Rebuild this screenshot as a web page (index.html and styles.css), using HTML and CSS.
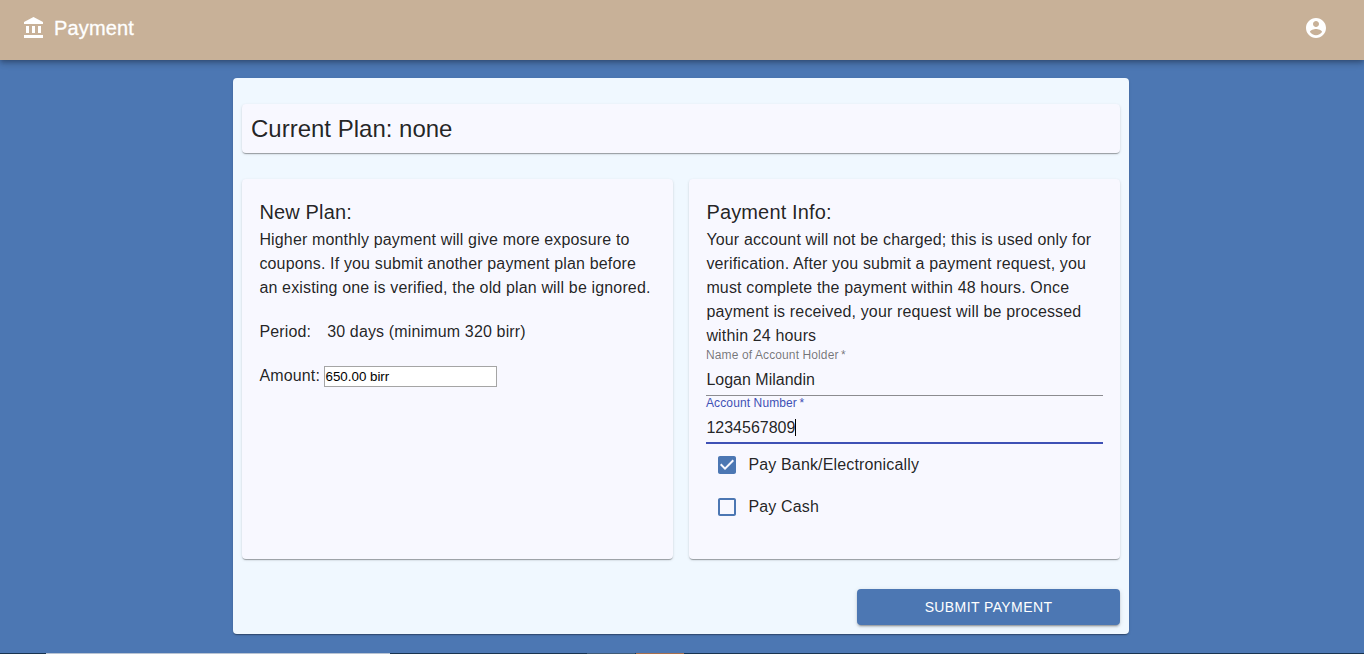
FILE: index.html
```html
<!DOCTYPE html>
<html lang="en">
<head>
<meta charset="utf-8">
<title>Payment</title>
<link rel="stylesheet" href="styles.css">
</head>
<body>
<header class="app-bar">
  <svg class="icon" viewBox="0 0 24 24"><path d="M4 10v7h3v-7H4zm6 0v7h3v-7h-3zM2 22h19v-3H2v3zm14-12v7h3v-7h-3zm-4.5-9L2 6v2h19V6l-9.500-5z"/></svg>
  <h1 class="app-title">Payment</h1>
  <svg class="icon" viewBox="0 0 24 24"><path d="M12 2C6.480 2 2 6.480 2 12s4.480 10 10 10 10-4.480 10-10S17.520 2 12 2zm0 3c1.660 0 3 1.340 3 3s-1.340 3-3 3-3-1.340-3-3 1.340-3 3-3zm0 14.200c-2.500 0-4.710-1.280-6-3.220.030-1.990 4-3.080 6-3.080 1.990 0 5.970 1.090 6 3.080-1.290 1.940-3.500 3.220-6 3.220z"/></svg>
</header>
<main class="sheet">
  <section class="paper current"><h2 class="current-title">Current Plan: none</h2></section>
  <div class="panels">
    <section class="paper panel">
      <h3 class="panel-title">New Plan:</h3>
      <p class="text">Higher monthly payment will give more exposure to coupons. If you submit another payment plan before an existing one is verified, the old plan will be ignored.</p>
      <div class="period"><span>Period:</span><span>30 days (minimum 320 birr)</span></div>
      <div class="amount"><span>Amount:</span><span class="amount-input">650.00 birr</span></div>
    </section>
    <section class="paper panel">
      <h3 class="panel-title">Payment Info:</h3>
      <p class="text">Your account will not be charged; this is used only for verification. After you submit a payment request, you must complete the payment within 48 hours. Once payment is received, your request will be processed within 24 hours</p>
      <div class="field"><span class="label">Name of Account Holder&#8201;*</span><span class="value">Logan Milandin</span></div>
      <div class="field focused"><span class="label">Account Number&#8201;*</span><span class="value">1234567809<i class="caret"></i></span></div>
      <div class="check"><svg class="box" viewBox="0 0 24 24"><path d="M19 3H5c-1.110 0-2 .9-2 2v14c0 1.100.890 2 2 2h14c1.110 0 2-.9 2-2V5c0-1.100-.890-2-2-2zm-9 14l-5-5 1.410-1.410L10 14.170l7.590-7.590L19 8l-9 9z"/></svg><span>Pay Bank/Electronically</span></div>
      <div class="check"><svg class="box" viewBox="0 0 24 24"><path d="M19 5v14H5V5h14m0-2H5c-1.100 0-2 .9-2 2v14c0 1.100.9 2 2 2h14c1.100 0 2-.9 2-2V5c0-1.100-.9-2-2-2z"/></svg><span>Pay Cash</span></div>
    </section>
  </div>
  <button class="submit" type="button">Submit Payment</button>
</main>
<footer class="taskbar"></footer>
</body>
</html>
```
FILE: styles.css
```css
* { box-sizing: border-box; }
body {
  margin: 0;
  height: 654px;
  overflow: hidden;
  display: flex;
  flex-direction: column;
  background: #4c77b3;
  color: rgba(0, 0, 0, 0.87);
  font: 16px/24px "Liberation Sans", Arial, sans-serif;
  letter-spacing: 0.15008px;
}
h1, h2, h3, p { margin: 0; font-weight: 400; }
.app-bar {
  flex: none;
  height: 60px;
  padding: 0 36px 4px 22px;
  display: flex;
  align-items: center;
  background: #c8b198;
  color: #fff;
  box-shadow: 0 2px 4px -1px rgba(0,0,0,.2), 0 4px 5px 0 rgba(0,0,0,.14), 0 1px 10px 0 rgba(0,0,0,.12);
}
.icon { width: 24px; height: 24px; flex: none; fill: currentColor; }
.app-title { flex: 1; margin-left: 8px; font-size: 20px; line-height: 32px; letter-spacing: 0.15px; -webkit-text-stroke: 0.3px #fff; }
.sheet {
  flex: none;
  width: 896px;
  height: 556px;
  margin: 18px 0 0 233px;
  padding: 26px 9px 9px;
  display: flex;
  flex-direction: column;
  background: #f0f8ff;
  border-radius: 4px;
}
.sheet, .paper {
  box-shadow: 0 2px 1px -1px rgba(0,0,0,.2), 0 1px 1px 0 rgba(0,0,0,.14), 0 1px 3px 0 rgba(0,0,0,.12);
}
.paper { background: #f8f8ff; border-radius: 4px; }
.current { height: 49px; padding: 9px; }
.current-title { font-size: 24px; line-height: 32px; letter-spacing: 0; }
.panels { display: grid; grid-template-columns: 1fr 1fr; gap: 16px; height: 380px; margin-top: 26px; }
.panel { padding: 17px; }
.panel-title { font-size: 20px; line-height: 32px; letter-spacing: 0.15px; }
.panel-title, .text, .period, .amount { padding-left: 0.4px; }
.period { display: flex; gap: 16px; margin-top: 20px; }
.amount { display: flex; align-items: center; gap: 3.500px; margin-top: 20px; }
.amount-input {
  width: 173px;
  height: 21px;
  margin-top: 1px;
  padding: 0 1px;
  border: 1px solid #a5a5a5;
  background: #fff;
  color: #000;
  font-size: 13.333px;
  line-height: 19px;
  letter-spacing: 0;
}
.field { height: 48px; display: flex; flex-direction: column; border-bottom: 1px solid #8c8c90; }
.label { flex: none; height: 16px; font-size: 12px; line-height: 14px; letter-spacing: 0.113px; color: rgba(0, 0, 0, 0.54); }
.value { flex: none; display: flex; align-items: center; height: 31px; padding-left: 0.4px; letter-spacing: 0; }
.focused { border-bottom: 2px solid #3f51b5; }
.focused .label { color: #3f51b5; }
.caret { width: 1px; height: 17px; margin-left: -0.4px; background: #000; }
.check { display: flex; align-items: center; height: 42px; padding-left: 9px; gap: 9.400px; }
.box { width: 24px; height: 24px; fill: #4c77b3; }
.submit {
  align-self: flex-end;
  width: 263px;
  height: 36px;
  margin-top: 30px;
  border: 0;
  border-radius: 4px;
  background: #4c77b3;
  color: #fff;
  font: 14px/24px "Liberation Sans", Arial, sans-serif;
  letter-spacing: 0.4px;
  text-transform: uppercase;
  box-shadow: 0 3px 1px -2px rgba(0,0,0,.2), 0 2px 2px 0 rgba(0,0,0,.14), 0 1px 5px 0 rgba(0,0,0,.12);
}
.taskbar {
  flex: none;
  height: 1px;
  margin-top: auto;
  background: linear-gradient(to right, #183450 46px, #b9c4d3 46px 390px, #183450 390px 587px, #405c78 587px 635px, #183450 635px 636px, #a96f4c 636px 684px, #183450 684px);
}
```
